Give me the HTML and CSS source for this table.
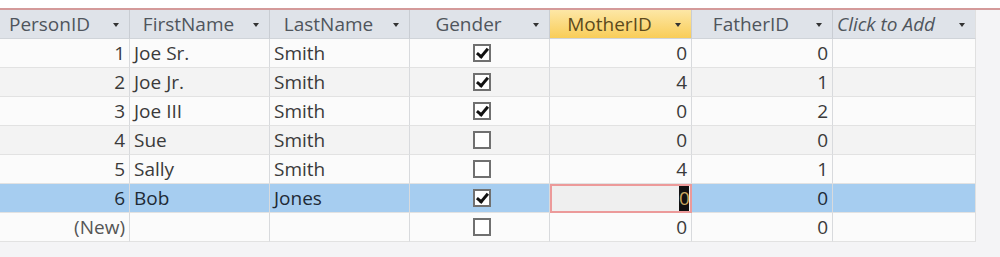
FILE: index.html
```html
<!DOCTYPE html>
<html>
<head>
<meta charset="utf-8">
<link rel="stylesheet" href="styles.css">
</head>
<body>
<div class="topline"></div>
<div class="sheet">
  <div class="row head">
    <div class="h c1"><span class="ht">PersonID</span><span class="arr"></span></div>
    <div class="h c2"><span class="ht">FirstName</span><span class="arr"></span></div>
    <div class="h c3"><span class="ht">LastName</span><span class="arr"></span></div>
    <div class="h c4"><span class="ht">Gender</span><span class="arr"></span></div>
    <div class="h c5 active"><span class="ht">MotherID</span><span class="arr"></span></div>
    <div class="h c6"><span class="ht">FatherID</span><span class="arr"></span></div>
    <div class="h c7 add"><span class="ht">Click to Add</span><span class="arr"></span></div>
  </div>

  <div class="row">
    <div class="d c1 num">1</div><div class="d c2">Joe Sr.</div><div class="d c3">Smith</div>
    <div class="d c4 chk"><span class="box on"></span></div>
    <div class="d c5 num">0</div><div class="d c6 num">0</div><div class="d c7"></div>
  </div>
  <div class="row alt">
    <div class="d c1 num">2</div><div class="d c2">Joe Jr.</div><div class="d c3">Smith</div>
    <div class="d c4 chk"><span class="box on"></span></div>
    <div class="d c5 num">4</div><div class="d c6 num">1</div><div class="d c7"></div>
  </div>
  <div class="row">
    <div class="d c1 num">3</div><div class="d c2">Joe III</div><div class="d c3">Smith</div>
    <div class="d c4 chk"><span class="box on"></span></div>
    <div class="d c5 num">0</div><div class="d c6 num">2</div><div class="d c7"></div>
  </div>
  <div class="row alt">
    <div class="d c1 num">4</div><div class="d c2">Sue</div><div class="d c3">Smith</div>
    <div class="d c4 chk"><span class="box"></span></div>
    <div class="d c5 num">0</div><div class="d c6 num">0</div><div class="d c7"></div>
  </div>
  <div class="row">
    <div class="d c1 num">5</div><div class="d c2">Sally</div><div class="d c3">Smith</div>
    <div class="d c4 chk"><span class="box"></span></div>
    <div class="d c5 num">4</div><div class="d c6 num">1</div><div class="d c7"></div>
  </div>
  <div class="row sel">
    <div class="d c1 num">6</div><div class="d c2">Bob</div><div class="d c3">Jones</div>
    <div class="d c4 chk"><span class="box on"></span></div>
    <div class="d c5 num editing"><span class="caret">0</span></div><div class="d c6 num">0</div><div class="d c7"></div>
  </div>
  <div class="row">
    <div class="d c1 num new">(New)</div><div class="d c2"></div><div class="d c3"></div>
    <div class="d c4 chk"><span class="box"></span></div>
    <div class="d c5 num">0</div><div class="d c6 num">0</div><div class="d c7"></div>
  </div>
</div>
</body>
</html>
```

FILE: styles.css
```css
html, body {
  margin: 0;
  padding: 0;
}
body {
  background: #f4f4f6;
  width: 1000px;
  height: 257px;
  overflow: hidden;
  font-family: "Open Sans", "Liberation Sans", sans-serif;
  font-size: 19px;
  color: #3a3a3a;
}
.topline {
  height: 8px;
  background: #ffffff;
  border-bottom: 2px solid #d49a9a;
}
.sheet {
  width: 976px;
  display: flex;
  flex-direction: column;
  background: #fbfbfb;
}
.row {
  display: flex;
  height: 29px;
  background: #fbfbfb;
}
.row.alt {
  background: #f3f3f3;
}
.row.sel {
  background: #a6cdf0;
  color: #1e2a36;
}
.row.head {
  height: 29px;
  background: #dfe3e9;
}
.c1 { width: 130px; }
.c2 { width: 140px; }
.c3 { width: 140px; }
.c4 { width: 140px; }
.c5 { width: 142px; }
.c6 { width: 141px; }
.c7 { width: 143px; }
.h, .d {
  box-sizing: border-box;
  border-right: 1px solid #d8dadd;
  border-bottom: 1px solid #e2e2e2;
  display: flex;
  align-items: center;
  flex-shrink: 0;
  white-space: nowrap;
}
.h {
  border-right: 1px solid #c9cdd3;
  border-bottom: 1px solid #d0d4d9;
  color: #4f555c;
  font-size: 19px;
  padding: 0 10px 0 0;
}
.h .ht {
  flex: 1;
  text-align: center;
  margin-right: 6px;
}
.h.c1 .ht {
  margin-right: 18px;
  padding-left: 4px;
}
.h.add .ht {
  text-align: left;
  font-style: italic;
  padding-left: 4px;
}
.h.active {
  background: linear-gradient(#fde7a6, #f9cd58);
  color: #5c4a1c;
}
.arr {
  width: 0;
  height: 0;
  border-left: 3px solid transparent;
  border-right: 3px solid transparent;
  border-top: 4px solid #333;
  margin-top: 2px;
}
.d {
  padding: 0 4px;
}
.num {
  justify-content: flex-end;
}
.new {
  color: #555;
}
.chk {
  justify-content: center;
}
.row .c7 {
  border-right: 1px solid #e0e0e0;
}
.box {
  width: 18px;
  height: 18px;
  box-sizing: border-box;
  border: 2px solid #707070;
  background: #fff;
  position: relative;
  margin-left: 5px;
}
.box.on::after {
  content: "";
  position: absolute;
  left: 4px;
  top: 0px;
  width: 4px;
  height: 9px;
  border-right: 3px solid #111;
  border-bottom: 3px solid #111;
  transform: rotate(40deg);
}
.editing {
  background: #efefef;
  border: 2px solid #ec9a9a;
  padding-right: 1px;
}
.caret {
  background: #111;
  color: #c8a860;
  padding: 0;
  width: 10px;
  text-align: center;
  line-height: 25px;
  height: 25px;
}
```
